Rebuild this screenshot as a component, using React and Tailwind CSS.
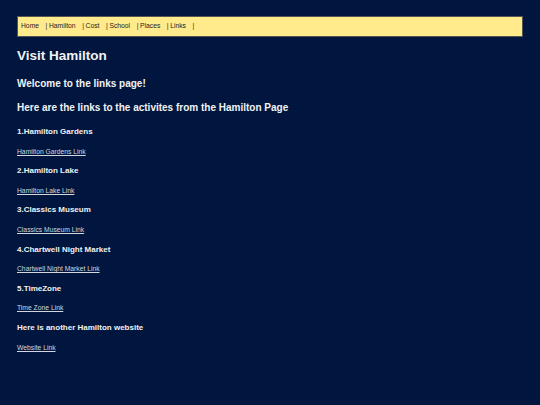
import React from 'react';

const NAV = ['Home', 'Hamilton', 'Cost', 'School', 'Places', 'Links'];

const ACTIVITIES = [
  { title: '1.Hamilton Gardens', link: 'Hamilton Gardens Link' },
  { title: '2.Hamilton Lake', link: 'Hamilton Lake Link' },
  { title: '3.Classics Museum', link: 'Classics Museum Link' },
  { title: '4.Chartwell Night Market', link: 'Chartwell Night Market Link' },
  { title: '5.TimeZone', link: 'Time Zone Link' },
  { title: 'Here is another Hamilton website', link: 'Website Link' },
];

export default function App() {
  return (
    <div
      className="min-h-[405px] w-full bg-[#00163f] px-[17px] pt-[16px] text-[#f2f2f2]"
      style={{ fontFamily: '"Liberation Sans", Arial, sans-serif' }}
    >
      {/* Nav bar */}
      <nav className="flex h-[21px] items-center border border-[#555] bg-[#ffeb8c] pl-[3px] text-[6.75px] text-[#222]">
        {NAV.map((item, i) => (
          <React.Fragment key={item}>
            {i > 0 && <span className="mr-[1.6px]">|</span>}
            <a className="mr-[6.6px]">{item}</a>
          </React.Fragment>
        ))}
        <span>|</span>
      </nav>

      <h1 className="mt-[11px] text-[13.5px] font-bold leading-[16px]">Visit Hamilton</h1>
      <h2 className="mt-[14px] text-[10px] font-bold leading-[12px]">Welcome to the links page!</h2>
      <h2 className="mt-[12px] text-[10px] font-bold leading-[12px]">
        Here are the links to the activites from the Hamilton Page
      </h2>

      <div className="mt-[13px] flex flex-col">
        {ACTIVITIES.map((a, i) => (
          <div key={a.title} className={i > 0 ? 'mt-[10.6px]' : ''}>
            <h3 className="text-[8px] font-bold leading-[10px]">{a.title}</h3>
            <a className="mt-[10.6px] block text-[6.75px] leading-[8px] text-[#d4d6de] underline">{a.link}</a>
          </div>
        ))}
      </div>
    </div>
  );
}
